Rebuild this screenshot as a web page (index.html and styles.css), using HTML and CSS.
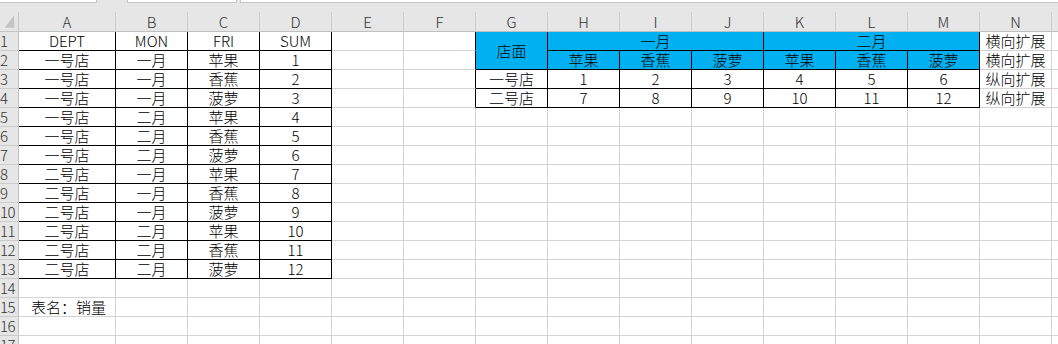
FILE: index.html
```html
<!DOCTYPE html>
<html lang="zh">
<head>
<meta charset="utf-8">
<title>销量</title>
<link rel="stylesheet" href="styles.css">
</head>
<body>
<div class="top"><div class="box b1"></div><div class="gap"></div><div class="box b2"></div><div class="gap2"></div><div class="box b3"></div></div>
<div class="sheet">
  <div class="corner"><svg width="19" height="20" viewBox="0 0 19 20"><polygon points="15,3 15,16 5,16" fill="#c4c4c4"/></svg></div>
  <div class="ch">A</div><div class="ch">B</div><div class="ch">C</div><div class="ch">D</div><div class="ch">E</div><div class="ch">F</div><div class="ch">G</div><div class="ch">H</div><div class="ch">I</div><div class="ch">J</div><div class="ch">K</div><div class="ch">L</div><div class="ch">M</div><div class="ch">N</div><div class="ch"></div>

  <div class="rh">1</div><div class="t">DEPT</div><div class="t">MON</div><div class="t">FRI</div><div class="t">SUM</div><div></div><div class="edge"></div><div class="t blue span-r2">店面</div><div class="t blue span-c3">一月</div><div class="t blue span-c3">二月</div><div>横向扩展</div><div></div>
  <div class="rh">2</div><div class="t">一号店</div><div class="t">一月</div><div class="t">苹果</div><div class="t">1</div><div></div><div class="edge"></div><div class="t blue">苹果</div><div class="t blue">香蕉</div><div class="t blue">菠萝</div><div class="t blue">苹果</div><div class="t blue">香蕉</div><div class="t blue">菠萝</div><div>横向扩展</div><div></div>
  <div class="rh">3</div><div class="t">一号店</div><div class="t">一月</div><div class="t">香蕉</div><div class="t">2</div><div></div><div class="edge"></div><div class="t">一号店</div><div class="t">1</div><div class="t">2</div><div class="t">3</div><div class="t">4</div><div class="t">5</div><div class="t">6</div><div>纵向扩展</div><div></div>
  <div class="rh">4</div><div class="t">一号店</div><div class="t">一月</div><div class="t">菠萝</div><div class="t">3</div><div></div><div class="edge"></div><div class="t">二号店</div><div class="t">7</div><div class="t">8</div><div class="t">9</div><div class="t">10</div><div class="t">11</div><div class="t">12</div><div>纵向扩展</div><div></div>
  <div class="rh">5</div><div class="t">一号店</div><div class="t">二月</div><div class="t">苹果</div><div class="t">4</div><div></div><div></div><div></div><div></div><div></div><div></div><div></div><div></div><div></div><div></div><div></div>
  <div class="rh">6</div><div class="t">一号店</div><div class="t">二月</div><div class="t">香蕉</div><div class="t">5</div><div></div><div></div><div></div><div></div><div></div><div></div><div></div><div></div><div></div><div></div><div></div>
  <div class="rh">7</div><div class="t">一号店</div><div class="t">二月</div><div class="t">菠萝</div><div class="t">6</div><div></div><div></div><div></div><div></div><div></div><div></div><div></div><div></div><div></div><div></div><div></div>
  <div class="rh">8</div><div class="t">二号店</div><div class="t">一月</div><div class="t">苹果</div><div class="t">7</div><div></div><div></div><div></div><div></div><div></div><div></div><div></div><div></div><div></div><div></div><div></div>
  <div class="rh">9</div><div class="t">二号店</div><div class="t">一月</div><div class="t">香蕉</div><div class="t">8</div><div></div><div></div><div></div><div></div><div></div><div></div><div></div><div></div><div></div><div></div><div></div>
  <div class="rh">10</div><div class="t">二号店</div><div class="t">一月</div><div class="t">菠萝</div><div class="t">9</div><div></div><div></div><div></div><div></div><div></div><div></div><div></div><div></div><div></div><div></div><div></div>
  <div class="rh">11</div><div class="t">二号店</div><div class="t">二月</div><div class="t">苹果</div><div class="t">10</div><div></div><div></div><div></div><div></div><div></div><div></div><div></div><div></div><div></div><div></div><div></div>
  <div class="rh">12</div><div class="t">二号店</div><div class="t">二月</div><div class="t">香蕉</div><div class="t">11</div><div></div><div></div><div></div><div></div><div></div><div></div><div></div><div></div><div></div><div></div><div></div>
  <div class="rh">13</div><div class="t">二号店</div><div class="t">二月</div><div class="t">菠萝</div><div class="t">12</div><div></div><div></div><div></div><div></div><div></div><div></div><div></div><div></div><div></div><div></div><div></div>
  <div class="rh">14</div><div></div><div></div><div></div><div></div><div></div><div></div><div></div><div></div><div></div><div></div><div></div><div></div><div></div><div></div><div></div>
  <div class="rh">15</div><div class="note">表名：销量</div><div></div><div></div><div></div><div></div><div></div><div></div><div></div><div></div><div></div><div></div><div></div><div></div><div></div><div></div>
  <div class="rh">16</div><div></div><div></div><div></div><div></div><div></div><div></div><div></div><div></div><div></div><div></div><div></div><div></div><div></div><div></div><div></div>
  <div class="rh">17</div><div></div><div></div><div></div><div></div><div></div><div></div><div></div><div></div><div></div><div></div><div></div><div></div><div></div><div></div><div></div>
</div>
</body>
</html>
```

FILE: styles.css
```css
html, body {
  margin: 0;
  padding: 0;
  background: #ffffff;
  overflow: hidden;
}

body {
  font-family: "Noto Sans CJK SC", "Noto Sans", sans-serif;
  font-weight: 300;
  color: #000000;
}

.top {
  height: 12px;
  background: #e6e6e6;
  display: flex;
  align-items: flex-start;
}

.box {
  height: 3px;
  box-sizing: border-box;
  background: #ffffff;
  border-bottom: 1px solid #c6c6c6;
  border-right: 1px solid #c6c6c6;
}

.b1 { width: 97px; }
.gap { width: 30px; }
.b2 { width: 110px; border-left: 1px solid #c6c6c6; }
.gap2 { width: 3px; }
.b3 { flex: 1; border-left: 1px solid #c6c6c6; border-right: none; }

.sheet {
  display: grid;
  grid-template-columns: 19px 97px repeat(14, 72px);
  grid-template-rows: 20px;
  grid-auto-rows: 19px;
  font-size: 15px;
  width: 1124px;
}

.sheet > div {
  box-sizing: border-box;
  border-right: 1px solid #d4d4d4;
  border-bottom: 1px solid #d4d4d4;
  display: flex;
  align-items: flex-end;
  justify-content: center;
  line-height: 18px;
  white-space: nowrap;
  overflow: visible;
}

.sheet > .corner {
  background: #e6e6e6;
  border-right-color: #c6c6c6;
  border-bottom-color: #c6c6c6;
  align-items: stretch;
  justify-content: flex-start;
}

.sheet > .ch {
  background: #e6e6e6;
  color: #333333;
  border-right-color: #cbcbcb;
  border-bottom-color: #c0c0c0;
  line-height: 19px;
}

.sheet > .rh {
  background: #e6e6e6;
  color: #333333;
  justify-content: flex-start;
  border-right-color: #c0c0c0;
  border-bottom-color: #cbcbcb;
  letter-spacing: -0.5px;
}

.sheet > .t {
  border-right-color: #000000;
  border-bottom-color: #000000;
}

.sheet > .edge {
  border-right-color: #000000;
}

.sheet > .blue {
  background: #00b0f0;
}

.sheet > .span-r2 {
  grid-row: span 2;
  align-items: center;
}

.sheet > .span-c3 {
  grid-column: span 3;
}

.sheet > .note {
  justify-content: flex-start;
  padding-left: 12px;
}
```
